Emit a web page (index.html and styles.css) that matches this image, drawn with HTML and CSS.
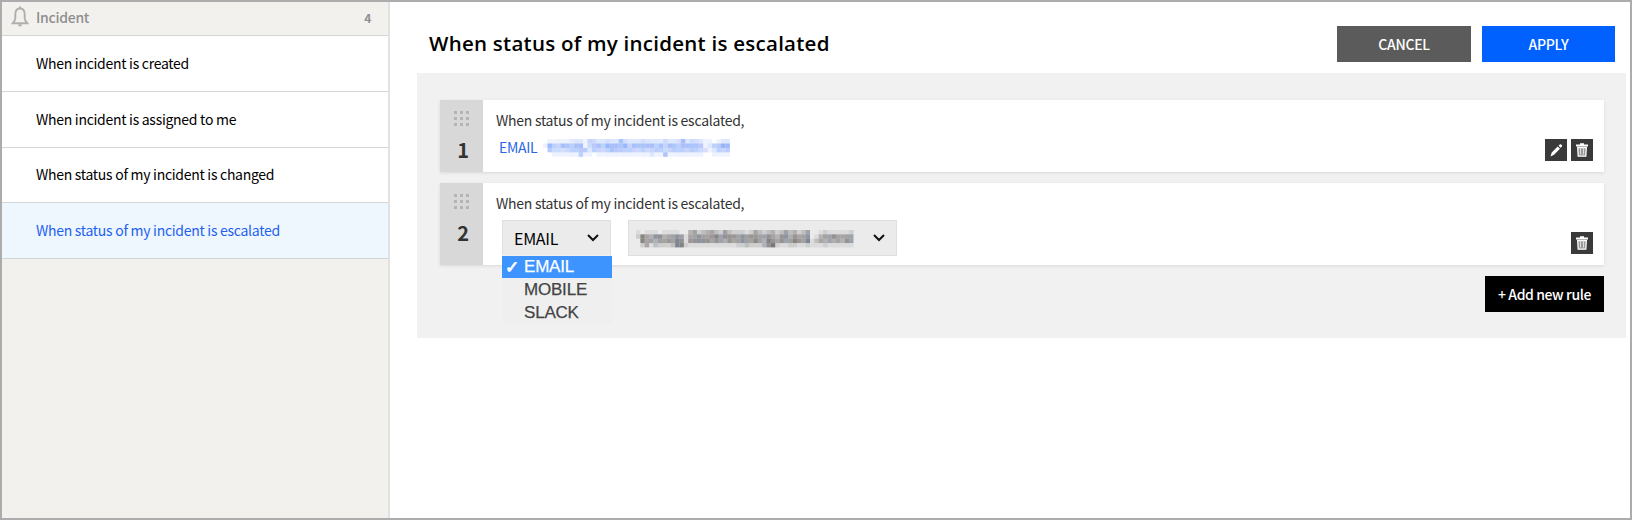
FILE: index.html
```html
<!DOCTYPE html>
<html lang="en">
<head>
<meta charset="utf-8">
<title>Notification rules</title>
<link rel="stylesheet" href="styles.css">
</head>
<body>
<div class="app">
  <aside class="sidebar">
    <div class="side-head">
      <svg class="bell" width="18" height="22" viewBox="0 0 18 22" fill="none" stroke="#b0b0b0" stroke-width="1.9"><path d="M9 2.200C5.700 2.600 4.300 5 4.300 8v4.500c0 1.700-.8 2.600-2.500 4.700h14.400c-1.700-2.100-2.500-3-2.500-4.700V8c0-3-1.400-5.400-4.700-5.800Z"/><path d="M9 .6v1.600M7.300 19.200h3.400" stroke-width="2"/></svg>
      <span>Incident</span>
      <span class="count">4</span>
    </div>
    <div class="side-item">When incident is created</div>
    <div class="side-item">When incident is assigned to me</div>
    <div class="side-item">When status of my incident is changed</div>
    <div class="side-item active">When status of my incident is escalated</div>
  </aside>
  <main class="main">
    <header class="head">
      <h1 class="title">When status of my incident is escalated</h1>
      <button class="btn cancel">CANCEL</button>
      <button class="btn apply">APPLY</button>
    </header>
    <section class="panel">
      <article class="rule first">
        <div class="handle">
          <svg width="16" height="16" viewBox="0 0 16 16" fill="#b4b4b4"><path d="M0 0h3v3H0zM6 0h3v3H6zM12 0h3v3h-3zM0 6h3v3H0zM6 6h3v3H6zM12 6h3v3h-3zM0 12h3v3H0zM6 12h3v3H6zM12 12h3v3h-3z"/></svg>
          <span class="num">1</span>
        </div>
        <div class="body">
          <div class="cond">When status of my incident is escalated,</div>
          <div class="target"><span class="method">EMAIL</span><svg class="mosaic blue" width="188" height="18"></svg></div>
        </div>
        <div class="actions">
          <button class="icon"><svg width="22" height="22" viewBox="0 0 22 22" fill="#fff"><path d="M5.500 17.500l1.200-4 6-6 2.300 2.300-6 6zM13.500 6.700l1.300-1.300c.9-.8 3 1.100 2.200 2.100l-1.300 1.300z"/></svg></button>
          <button class="icon"><svg width="22" height="22" viewBox="0 0 22 22"><path d="M5 7.500V5.500h4V4.200h4v1.300h4v2z" fill="#fff"/><path d="M6.700 8.500l.5 8.700h7.600l.5-8.700z" fill="#999" stroke="#fff" stroke-width="1.300"/><path d="M9.500 8.500v7M12.500 8.500v7" stroke="#ddd"/></svg></button>
        </div>
      </article>
      <article class="rule second">
        <div class="handle">
          <svg width="16" height="16" viewBox="0 0 16 16" fill="#b4b4b4"><path d="M0 0h3v3H0zM6 0h3v3H6zM12 0h3v3h-3zM0 6h3v3H0zM6 6h3v3H6zM12 6h3v3h-3zM0 12h3v3H0zM6 12h3v3H6zM12 12h3v3h-3z"/></svg>
          <span class="num">2</span>
        </div>
        <div class="body">
          <div class="cond">When status of my incident is escalated,</div>
          <div class="selects">
            <div class="select method-select"><span>EMAIL</span><svg width="12" height="8" viewBox="0 0 12 8" fill="none" stroke="#111" stroke-width="2"><path d="M1 1l5 5 5-5"/></svg>
              <div class="menu">
                <div class="option chosen"><span class="check">✓</span>EMAIL</div>
                <div class="option">MOBILE</div>
                <div class="option">SLACK</div>
              </div>
            </div>
            <div class="select address-select"><svg class="mosaic gray" width="220" height="18"></svg><svg width="12" height="8" viewBox="0 0 12 8" fill="none" stroke="#111" stroke-width="2"><path d="M1 1l5 5 5-5"/></svg></div>
          </div>
        </div>
        <div class="actions">
          <button class="icon"><svg width="22" height="22" viewBox="0 0 22 22"><path d="M5 7.500V5.500h4V4.200h4v1.300h4v2z" fill="#fff"/><path d="M6.700 8.500l.5 8.700h7.600l.5-8.700z" fill="#999" stroke="#fff" stroke-width="1.300"/><path d="M9.500 8.500v7M12.500 8.500v7" stroke="#ddd"/></svg></button>
        </div>
      </article>
      <button class="add">+ Add new rule</button>
    </section>
  </main>
</div>
<script src="mosaic.js"></script>
</body>
</html>
```
FILE: styles.css
```css
* { box-sizing: border-box; }
body { margin: 0; font-family: "Noto Sans CJK KR", sans-serif; font-size: 14px; letter-spacing: -.28px; color: #000; }
button { font: inherit; letter-spacing: inherit; border: 0; padding: 0; border-radius: 0; }
.app { display: flex; width: 1632px; height: 520px; border: 2px solid #acacac; background: #fff; overflow: hidden; }
.sidebar { width: 388px; flex: none; background: #f3f1ee; border-right: 2px solid #e1e1e1; }
.side-head { display: flex; align-items: center; height: 34px; padding: 0 17px 3px 9px; border-bottom: 1px solid #d5d5d5; color: #8f8f8f; font-weight: 500; }
.bell { margin-right: 7px; }
.count { margin-left: auto; font-size: 12px; font-weight: 700; }
.side-item { display: flex; align-items: center; height: 55.75px; padding: 0 0 1px 34px; background: #fff; border-bottom: 1px solid #d5d5d5; }
.active { background: #eef6fe; color: #1f62ee; }
.main { flex: 1; padding: 24px 4px 0 27px; }
.head { display: flex; align-items: flex-start; height: 47px; padding-right: 11px; }
.title { flex: 1; margin: 0 0 0 12px; font: 600 20.500px/34px "Open Sans", sans-serif; letter-spacing: .25px; white-space: nowrap; }
.btn { height: 36px; width: 134px; color: #fff; font-weight: 500; }
.cancel { background: #5b5b5b; margin-right: 11px; }
.apply { background: #0061ff; width: 133px; }
.panel { display: flex; flex-direction: column; height: 265px; padding: 27px 22px 0 23px; background: #f1f1f1; }
.rule { display: flex; flex: none; background: #fff; box-shadow: 0 1px 3px rgba(0,0,0,.1); }
.first { height: 72px; margin-bottom: 11px; }
.second { height: 82px; margin-bottom: 11px; }
.handle { display: flex; flex-direction: column; align-items: center; width: 43px; padding-top: 11px; background: #d8d8d8; color: #333; }
.num { font-size: 20px; line-height: 24px; font-weight: 700; margin: 11px 0 0 3px; }
.body { flex: 1; padding: 9px 0 0 13px; color: #333; }
.cond { line-height: 22px; letter-spacing: -.26px; }
.target { display: flex; align-items: center; height: 31px; padding-left: 3px; color: #2b66e8; }
.method { width: 44px; }
.blue { margin-top: 3px; }
.gray { margin: 2px 0 0 -4px; }
.selects { display: flex; gap: 17px; padding: 6px 0 0 6px; }
.select { position: relative; display: flex; align-items: center; justify-content: space-between; height: 36px; padding: 0 11px; background: #ebebeb; border: 1px solid #dfdfdf; color: #000; font-size: 16px; }
.method-select { width: 109px; }
.address-select { width: 269px; }
.menu { position: absolute; z-index: 2; left: -1px; top: 34px; width: 110px; height: 68px; background: #efefef; color: #444; font: 17px/23px "Liberation Sans", sans-serif; letter-spacing: -.2px; -webkit-text-stroke: .25px; }
.option { position: relative; height: 23px; padding-left: 22px; line-height: 24px; }
.chosen { background: #3d94ff; color: #fff; line-height: 22px; margin-top: 1px; height: 22px; }
.check { position: absolute; left: 3px; font-family: "DejaVu Sans", sans-serif; -webkit-text-stroke: .8px; }
.actions { display: flex; align-items: flex-end; gap: 4px; padding: 0 11px 11px 0; }
.icon { width: 22px; height: 22px; background: #3a3a3a; }
.icon svg { display: block; }
.add { flex: none; align-self: flex-end; width: 119px; height: 36px; background: #000; color: #fff; font-weight: 500; letter-spacing: -.4px; }
```
FILE: mosaic.js
```js
// Draws a masked address as shaded cells; each digit is a cell's strength.
function drawMosaic(selector, rows, cell, colors) {
  const svg = document.querySelector(selector);
  rows.forEach((row, y) => [...row].forEach((level, x) => {
    const rect = document.createElementNS("http://www.w3.org/2000/svg", "rect");
    rect.setAttribute("x", x * cell);
    rect.setAttribute("y", y * cell);
    rect.setAttribute("width", cell);
    rect.setAttribute("height", cell);
    rect.setAttribute("fill", colors[(x * 3 + y * 5) % colors.length]);
    rect.setAttribute("opacity", level / 10);
    svg.appendChild(rect);
  }));
}

drawMosaic(".blue", [
  "011111222143223225322232222322352332110122",
  "164455465135546655645556545455465555124566",
  "043333445424434554444343444344444443312444",
  "001111114110111111111111211511111111001111"
], 4.45, ["#5b8cf5", "#4f82f8", "#7a91f2", "#4d8bff"]);

drawMosaic(".gray", [
  "10111011110045234532532221253234235342350012111112",
  "27546645565155655675666565665565466465560145565555",
  "07554556576166666565465565575476565576571354545465",
  "02513222377211111111111223222468211221121112111111"
], 4.35, ["#55555b", "#685d60", "#4f5a6c", "#5f5b55", "#5a5a5a"]);
```
